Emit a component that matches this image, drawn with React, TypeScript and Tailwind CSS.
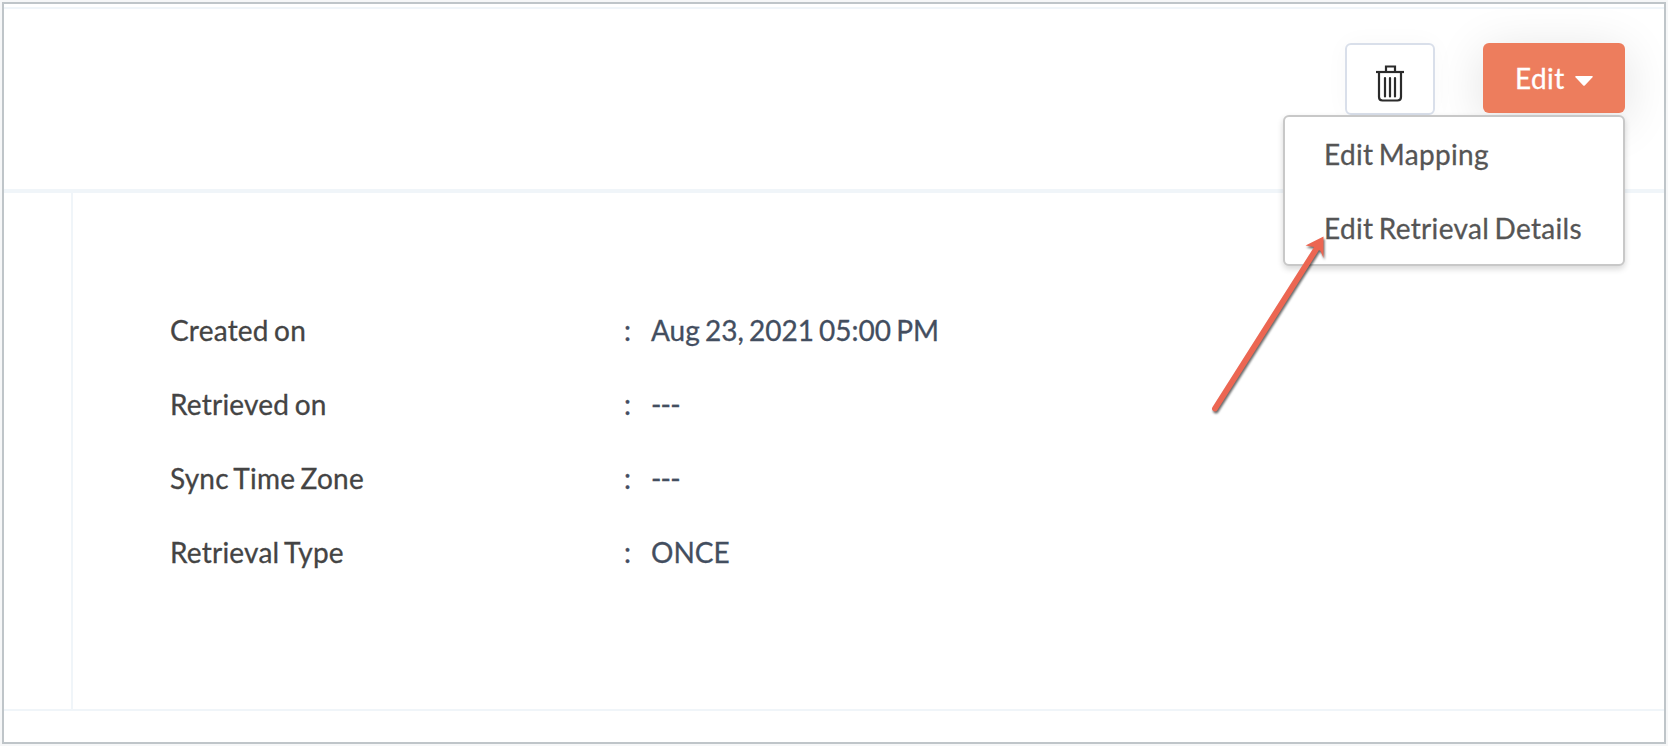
interface Detail {
  label: string
  value: string
}

const details: Detail[] = [
  { label: 'Created on', value: 'Aug 23, 2021 05:00 PM' },
  { label: 'Retrieved on', value: '---' },
  { label: 'Sync Time Zone', value: '---' },
  { label: 'Retrieval Type', value: 'ONCE' },
]

const menuItems = ['Edit Mapping', 'Edit Retrieval Details']

function TrashIcon() {
  return (
    <svg width="28" height="38" viewBox="0 0 28 38" fill="none" stroke="#2b2b2b" strokeWidth="2.2">
      <path d="M0 7H28" />
      <path d="M10 7V1.5H19V7" />
      <path d="M3 7V32Q3 35.5 6.5 35.5H21.5Q25 35.5 25 32V7" />
      <path d="M9 13V31.5M14 13V31.5M19 13V31.5" strokeLinecap="round" />
    </svg>
  )
}

function Arrow() {
  return (
    <svg
      width="130"
      height="190"
      viewBox="1205 230 130 190"
      className="pointer-events-none absolute top-[226px] left-[1201px] z-20 drop-shadow-[1px_2px_1px_rgba(0,0,0,0.6)]"
    >
      <path d="M1215 408.5L1317.5 247" stroke="#ec6652" strokeWidth="5.8" strokeLinecap="round" />
      <path d="M1323.5 236.5L1305.5 245.5L1314 247L1320.5 251L1323.5 258Z" fill="#ec6652" />
    </svg>
  )
}

export default function App() {
  return (
    <div className="h-[746px] w-[1668px] bg-[#f6f7f8] p-[2px] font-['Lato',sans-serif] text-[28px] [word-spacing:-2px] [-webkit-text-stroke:0.3px]">
      <main className="relative flex h-[742px] w-[1664px] flex-col border-2 border-[#bfc5c9] bg-white">
        {/* Header */}
        <header className="mt-[3px] flex h-[186px] shrink-0 items-start justify-end border-t-2 border-b-4 border-[#f0f5f9] pt-[34px] pr-[39px]">
          <button
            aria-label="Delete"
            className="mr-12 flex h-[72px] w-[90px] justify-center rounded-md border-2 border-[#d9dfea] bg-white pt-5 shadow-[0_0_24px_rgba(0,0,0,0.03)]"
          >
            <TrashIcon />
          </button>
          <div className="relative">
            <button className="flex h-[70px] w-[142px] items-center rounded-md bg-[#ed7d5d] pl-8 text-white shadow-[0_8px_50px_rgba(0,0,0,0.12)]">
              <span className="tracking-[0.4px]">Edit</span>
              <svg width="18" height="10" viewBox="0 0 18 10" className="mt-1.5 ml-2.5">
                <path d="M1 0H17Q18.5 0 17.5 1.2L10 9.3Q9 10.3 8 9.3L.5 1.2Q-.5 0 1 0Z" fill="white" />
              </svg>
            </button>
            <ul className="absolute top-[72px] right-0 z-10 h-[151px] w-[342px] rounded-md border-2 border-[#c8c8c8] bg-white tracking-[0.32px] text-[#555] shadow-[0_3px_6px_rgba(0,0,0,0.16)]">
              {menuItems.map((item) => (
                <li key={item} className="h-[74px] pl-[39px] leading-[74px] whitespace-nowrap">
                  {item}
                </li>
              ))}
            </ul>
          </div>
        </header>

        {/* Details */}
        <section className="flex h-[518px] shrink-0 border-b-2 border-[#f0f5f9]">
          <div className="w-[69px] border-r-2 border-[#f0f5f9]" />
          <dl className="pt-[100px] pl-[97px]">
            {details.map(({ label, value }) => (
              <div key={label} className="flex h-[74px] leading-[74px]">
                <dt className="w-[454px] tracking-[0.22px] text-[#444]">{label}</dt>
                <dd className="flex text-[#434e5f]">
                  <span className="w-[27px]">:</span>
                  <span className={value === '---' ? 'tracking-[-0.8px]' : ''}>{value}</span>
                </dd>
              </div>
            ))}
          </dl>
        </section>

        <Arrow />
      </main>
    </div>
  )
}
